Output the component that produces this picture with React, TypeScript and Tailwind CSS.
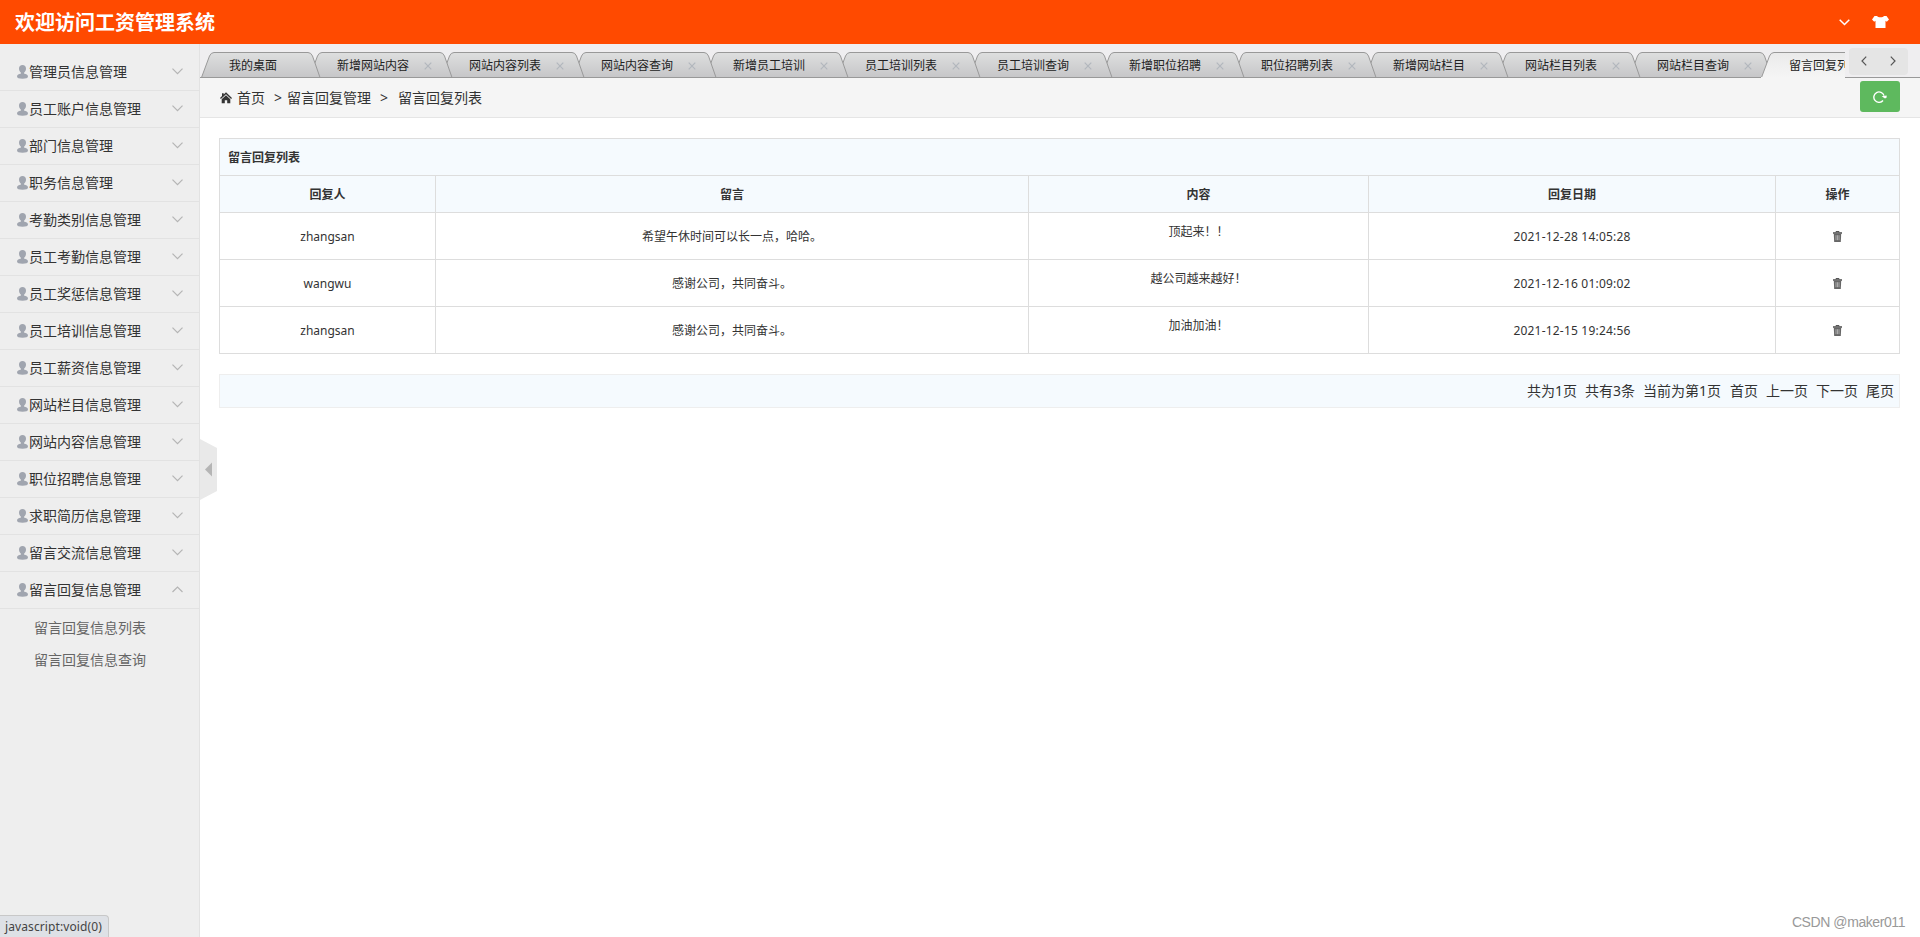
import React from 'react';

const menus = [
  '管理员信息管理',
  '员工账户信息管理',
  '部门信息管理',
  '职务信息管理',
  '考勤类别信息管理',
  '员工考勤信息管理',
  '员工奖惩信息管理',
  '员工培训信息管理',
  '员工薪资信息管理',
  '网站栏目信息管理',
  '网站内容信息管理',
  '职位招聘信息管理',
  '求职简历信息管理',
  '留言交流信息管理',
  '留言回复信息管理',
];

const tabs = [
  '我的桌面',
  '新增网站内容',
  '网站内容列表',
  '网站内容查询',
  '新增员工培训',
  '员工培训列表',
  '员工培训查询',
  '新增职位招聘',
  '职位招聘列表',
  '新增网站栏目',
  '网站栏目列表',
  '网站栏目查询',
  '留言回复列表',
];

const rows = [
  { name: 'zhangsan', message: '希望午休时间可以长一点，哈哈。', content: '顶起来！！', date: '2021-12-28 14:05:28' },
  { name: 'wangwu', message: '感谢公司，共同奋斗。', content: '越公司越来越好！', date: '2021-12-16 01:09:02' },
  { name: 'zhangsan', message: '感谢公司，共同奋斗。', content: '加油加油！', date: '2021-12-15 19:24:56' },
];

const UserIcon = () => (
  <svg className="h-[14px] w-[11px] shrink-0" viewBox="0 0 11 14" fill="#a0a5af">
    <path d="M5.5 0C3.400 0 2 1.300 2 3.600c0 2 .9 3.500 2 4.200v.8C1.800 9.100.1 9.800 0 11.600c0 1.500 2 2.200 5.500 2.200S11 13.100 11 11.600c-.1-1.800-1.800-2.500-4-3v-.8c1.100-.7 2-2.200 2-4.200C9 1.300 7.600 0 5.500 0z" />
  </svg>
);

const TrashIcon = () => (
  <svg className="h-[11px] w-[9px]" viewBox="0 0 9 11" fill="none">
    <path d="M3 1.500V.5h3v1" stroke="#555" />
    <path d="M0 1.200h9v1.600H0z" fill="#555" />
    <path d="M.8 2.800h7.400L7.800 11H1.200z" fill="#666" />
    <path d="M3 4.200v5M4.500 4.200v5M6 4.200v5" stroke="#c8c8c8" strokeWidth=".7" />
  </svg>
);

const Tab = ({ label, first, active, order }: { label: string; first: boolean; active: boolean; order: number }) => {
  const end = first ? 119 : 143;
  const edge = `M.5 25.500 L8.500 4 Q10 .5 13 .5 H${end - 12} Q${end - 9} .5 ${end - 7.500} 4 L${end} 25.500`;
  return (
    <li
      className={`relative flex h-[26px] shrink-0 items-center pt-[2px] pl-[17px] ${first ? 'w-[108px]' : 'w-[132px]'}`}
      style={{ zIndex: order }}
    >
      <svg className="absolute top-0 -left-[11px]" width={end + 1} height="26">
        <path d={edge} fill={active ? 'url(#tabActive)' : 'url(#tabIdle)'} stroke="#999" />
        <path d={`M0 25.500H${end + 1}`} stroke={active ? '#f5f5f5' : '#999'} />
      </svg>
      <span className="relative text-xs text-[#222]">{label}</span>
      {!first && !active && (
        <svg className="relative ml-[15px] size-[8px]" viewBox="0 0 8 8" stroke="#b2b7bd" strokeWidth="1.200">
          <path d="M.7.700l6.600 6.600M7.300.700L.7 7.300" />
        </svg>
      )}
    </li>
  );
};

const Sidebar = () => (
  <aside className="w-[200px] shrink-0 border-r border-[#e2e2e2] bg-[#eee] pt-[10px]">
    {menus.map((menu, i) => (
      <div key={menu} className="flex h-[37px] items-center border-b border-[#e2e2e2] pr-4 pb-px pl-[17px]">
        <UserIcon />
        <span className="ml-px grow text-sm text-[#333]">{menu}</span>
        <svg className="h-[7px] w-[11px]" viewBox="0 0 11 7" fill="none" stroke="#b4b4b4" strokeWidth="1.200">
          <path d={i === menus.length - 1 ? 'M.5 6l5-5 5 5' : 'M.5.700l5 5 5-5'} />
        </svg>
      </div>
    ))}
    <ul className="pt-[3px] pl-[34px] text-sm text-[#666]">
      <li className="h-8 leading-[31px]">留言回复信息列表</li>
      <li className="h-8 leading-[31px]">留言回复信息查询</li>
    </ul>
  </aside>
);

const TabBar = () => (
  <div className="flex h-[34px] items-end bg-[#efeef0] shadow-[inset_0_-1px_0_#999]">
    <svg width="0" height="0" className="absolute">
      <defs>
        <linearGradient id="tabIdle" x1="0" y1="0" x2="0" y2="1">
          <stop offset="0" stopColor="#dedfdf" />
          <stop offset="1" stopColor="#c6c6c8" />
        </linearGradient>
        <linearGradient id="tabActive" x1="0" y1="0" x2="0" y2="1">
          <stop offset="0" stopColor="#eaeaea" />
          <stop offset="1" stopColor="#f5f5f5" />
        </linearGradient>
      </defs>
    </svg>
    <ul className="isolate flex w-[1645px] overflow-hidden pl-[12px]">
      {tabs.map((tab, i) => (
        <Tab
          key={tab}
          label={tab}
          first={i === 0}
          active={i === tabs.length - 1}
          order={i === tabs.length - 1 ? 20 : tabs.length - i}
        />
      ))}
    </ul>
    <div className="mb-[3px] ml-1 flex h-[27px] w-[59px] items-center justify-between rounded bg-[#e5e5e5] px-3 pb-px">
      <svg width="6" height="10" fill="none" stroke="#555" strokeWidth="1.200">
        <path d="M5.200.700L1 5l4.200 4.300" />
      </svg>
      <svg width="6" height="10" fill="none" stroke="#555" strokeWidth="1.200">
        <path d="M.8.700L5 5 .8 9.300" />
      </svg>
    </div>
  </div>
);

const Breadcrumb = () => (
  <nav className="flex h-[40px] items-center justify-between border-b border-[#e5e5e5] bg-[#f5f5f5] pr-5 pl-5 text-sm text-[#333]">
    <div className="flex items-center">
      <svg width="12" height="12" viewBox="0 0 12 12" fill="#333">
        <path d="M6 .3L12 6l-.9 1L6 2.300.9 7 0 6l2-1.900V1.200h1.700v1.300z" />
        <path d="M6 3.300l4.300 3.900v4H7.200V8.200H4.800v3H1.700v-4z" />
      </svg>
      <span className="ml-[5px]">首页</span>
      <span className="ml-[9px]">&gt;</span>
      <span className="ml-[5px]">留言回复管理</span>
      <span className="ml-[9px]">&gt;</span>
      <span className="ml-[10px]">留言回复列表</span>
    </div>
    <button className="mb-[2px] flex h-[31px] w-10 items-center justify-center rounded-[3px] bg-[#5eb95e]">
      <svg width="14" height="12" viewBox="0 0 14 12" fill="none">
        <path d="M10 9.500A5.200 5.200 0 1 1 11 4.600" stroke="#fff" strokeWidth="1.400" />
        <path d="M8.600 5.200l5-.6.1 1.800-1.700 1.200z" fill="#fff" />
      </svg>
    </button>
  </nav>
);

const ReplyTable = () => (
  <table className="w-[1681px] table-fixed border-collapse text-center text-xs text-[#333] [&_td]:border [&_td]:border-[#ddd] [&_td]:pt-[2px] [&_th]:border [&_th]:border-[#ddd] [&_th]:p-0 [&_th]:pt-[2px]">
    <colgroup>
      <col className="w-[216px]" />
      <col className="w-[593px]" />
      <col className="w-[340px]" />
      <col className="w-[407px]" />
      <col className="w-[124px]" />
    </colgroup>
    <thead className="bg-[#f5fafe] font-bold">
      <tr className="h-[37px]">
        <th colSpan={5} className="text-left">
          <span className="pl-2">留言回复列表</span>
        </th>
      </tr>
      <tr className="h-[37px]">
        <th>回复人</th>
        <th>留言</th>
        <th>内容</th>
        <th>回复日期</th>
        <th>操作</th>
      </tr>
    </thead>
    <tbody>
      {rows.map((row) => (
        <tr key={row.date} className="h-[47px]">
          <td>{row.name}</td>
          <td>{row.message}</td>
          <td className="pb-[10px]">{row.content}</td>
          <td className="tracking-[0.2px]">{row.date}</td>
          <td>
            <div className="flex justify-center pb-[2px]">
              <TrashIcon />
            </div>
          </td>
        </tr>
      ))}
    </tbody>
  </table>
);

const App: React.FC = () => {
  return (
    <div className="relative flex h-[937px] w-[1920px] flex-col overflow-hidden bg-white font-['Noto_Sans','Noto_Sans_CJK_SC',sans-serif]">
      <header className="flex h-11 shrink-0 items-center justify-between bg-[#ff4a00] pl-[15px] text-white">
        <h1 className="pt-[2px] text-xl font-bold">欢迎访问工资管理系统</h1>
        <div className="flex items-center pr-[31px]">
          <svg width="11" height="7" fill="none" stroke="#fff" strokeWidth="1.500">
            <path d="M.7.700l4.800 4.800L10.300.7" />
          </svg>
          <svg className="ml-[22px]" width="17" height="12" viewBox="0 0 17 12" fill="#fff">
            <path d="M5 0c.8 1.800 6.200 1.800 7 0h2.500L17 3.500l-2.200 2.200-1.300-.9V12h-10V4.800l-1.300.9L0 3.500 2.500 0z" />
          </svg>
        </div>
      </header>

      <div className="flex min-h-0 grow">
        <Sidebar />
        <main className="min-w-0 grow">
          <TabBar />
          <Breadcrumb />
          <div className="px-[19px] pt-5">
            <ReplyTable />
            <div className="mt-5 flex h-[34px] w-[1681px] items-center justify-end gap-2 border border-[#eee] bg-[#f5fafe] pr-[5px] text-sm text-[#333]">
              <span>共为1页</span>
              <span>共有3条</span>
              <span className="mr-[1px]">当前为第1页</span>
              <span>首页</span>
              <span>上一页</span>
              <span>下一页</span>
              <span>尾页</span>
            </div>
          </div>
        </main>
      </div>

      {/* Sidebar collapse handle */}
      <svg className="absolute top-[439px] left-[200px]" width="17" height="61">
        <path d="M0 0l17 9v43L0 61z" fill="#e9e9e9" />
        <path d="M12 23.500v14L5 30.500z" fill="#b5b5b5" />
      </svg>

      <div className="absolute bottom-0 left-0 h-[22px] w-[109px] rounded-tr border-t border-r border-[#c8c8c8] bg-[#dee1e6] pl-[5px] text-xs leading-[22px] tracking-[0.1px] text-[#444]">
        javascript:void(0)
      </div>
      <div className="absolute right-[15px] bottom-[5px] font-['Liberation_Sans',sans-serif] text-sm tracking-[-0.42px] text-[#999]">
        CSDN @maker011
      </div>
    </div>
  );
};

export default App;
